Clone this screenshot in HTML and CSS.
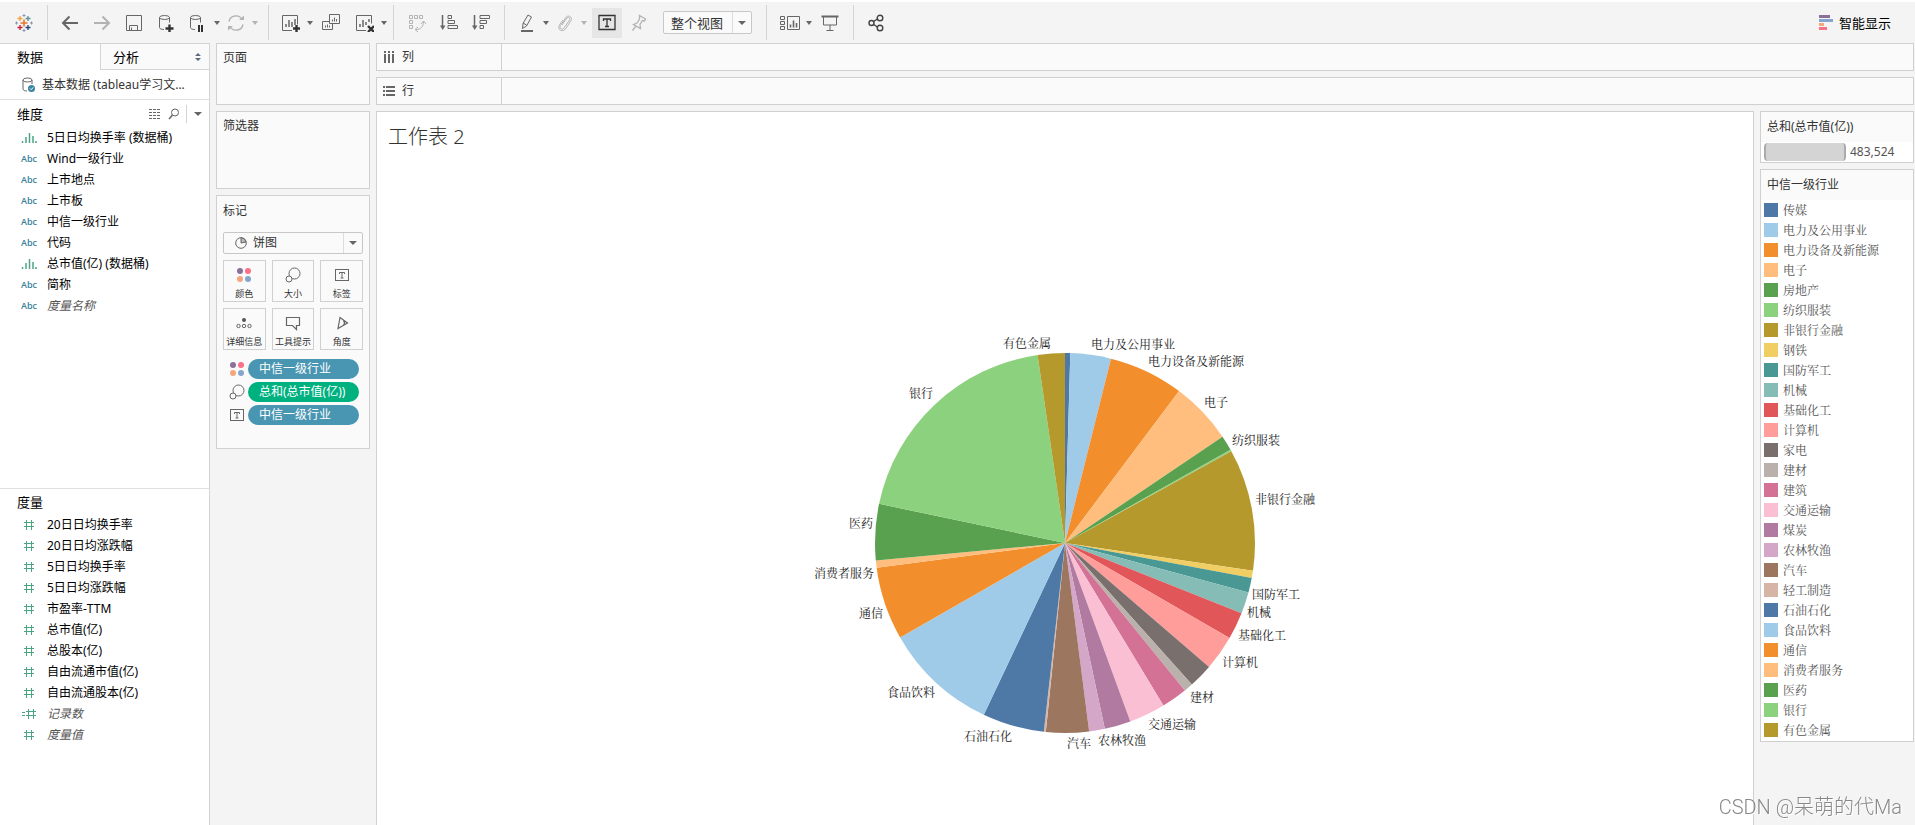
FILE: index.html
```html
<!DOCTYPE html>
<html lang="zh-CN">
<head>
<meta charset="utf-8">
<title>工作表 2</title>
<link rel="stylesheet" href="styles.css">
</head>
<body>
<svg class="sprite" aria-hidden="true">
  <symbol id="i-size" viewBox="0 0 16 16"><circle cx="9.500" cy="6.500" r="5.500"/><circle cx="4" cy="12" r="3" class="cover"/></symbol>
  <symbol id="i-label" viewBox="0 0 16 16"><rect x="1.500" y="2.500" width="13" height="11"/><path d="M5.500 7V5.500h5V7M8 5.500V11M6.500 11h3"/></symbol>
  <symbol id="i-dots" viewBox="0 0 16 16"><g stroke="none"><circle cx="4" cy="4" r="3" fill="#8a7198"/><circle cx="12" cy="4" r="3" fill="#fb7185"/><circle cx="4" cy="12" r="3" fill="#f4a77c"/><circle cx="12" cy="12" r="3" fill="#86a5cd"/></g></symbol>
  <symbol id="i-hist" viewBox="0 0 16 12"><path stroke="#4ba583" stroke-width="1.500" d="M1.500 9v2M5 5v6M8.500 1v10M12 4v7M15 9v2"/></symbol>
  <symbol id="i-hash" viewBox="0 0 12 12"><path stroke="#4ba583" d="M1 3.500h10M1 7.500h10M3.500 1v10M8.500 1v10"/></symbol>
  <symbol id="i-eqhash" viewBox="0 0 16 12"><path stroke="#4ba583" d="M5 3.500h10M5 7.500h10M7.500 1v10M12.500 1v10M1 4.500h3M1 7.500h3"/></symbol>
</svg>

<header class="toolbar">
  <div class="brand">
    <svg class="icon" viewBox="0 0 18 18" aria-label="Tableau"><path stroke="#e8762b" stroke-width="1.600" d="M9 5.500v7M5.500 9h7"/><path stroke="#f0a33c" stroke-width="1.300" d="M5 2v5M2.500 4.500h5"/><path stroke="#5a8f9e" stroke-width="1.300" d="M13 2v5M10.500 4.500h5"/><path stroke="#c72037" stroke-width="1.300" d="M5 11v5M2.500 13.500h5"/><path stroke="#1f447e" stroke-width="1.300" d="M13 11v5M10.500 13.500h5"/><path stroke="#8597b5" d="M9 0v3M7.500 1.500h3M9 15v3M7.500 16.500h3M1.500 7.500v3M0 9h3M16.500 7.500v3M15 9h3"/></svg>
  </div>
  <span class="sep"></span>
  <div class="group wide-end">
    <button class="tool" aria-label="后退"><svg class="icon" viewBox="0 0 18 18"><path stroke-width="2" d="M17 9H2M8.500 2.500L2 9l6.500 6.500"/></svg></button>
    <button class="tool off" aria-label="前进"><svg class="icon" viewBox="0 0 18 18"><path stroke-width="2" d="M1 9h15M9.500 2.500L16 9l-6.500 6.500"/></svg></button>
    <button class="tool" aria-label="保存"><svg class="icon" viewBox="0 0 18 18"><path d="M1.500 1.500h15v15h-15zM4.500 16.500v-5h8v5M6.500 16.500v-3"/></svg></button>
    <button class="tool" aria-label="新建数据源"><svg class="icon" viewBox="0 0 18 18"><ellipse cx="7.500" cy="3.500" rx="5" ry="2"/><path d="M2.500 3.500v10c0 1.300 2 2 4.500 2M12.500 3.500v5"/><path class="dark" stroke-width="2.400" d="M12.500 10.500v8M8.500 14.500h8"/></svg></button>
    <div class="split"><button class="tool" aria-label="暂停自动更新"><svg class="icon" viewBox="0 0 18 18"><ellipse cx="6.500" cy="3.500" rx="5" ry="2"/><path d="M1.500 3.500v10c0 1.300 2 2 4.500 2M11.500 3.500v5"/><path class="dark" stroke-width="2" d="M10 11v7M13 11v7"/></svg></button><button class="caret" aria-label="更多"></button></div>
    <div class="split off"><button class="tool" aria-label="刷新"><svg class="icon" viewBox="0 0 18 18"><path stroke-width="1.400" d="M2 7.500A7 7 0 0 1 15 5.500M16 10.500A7 7 0 0 1 3 12.500"/><path class="fill" d="M12 6h5V1.500zM6 12H1v4.500z"/></svg></button><button class="caret" aria-label="更多"></button></div>
  </div>
  <span class="sep"></span>
  <div class="group spaced">
    <div class="split"><button class="tool" aria-label="新建工作表"><svg class="icon" viewBox="0 0 18 18"><path d="M10 16.500H.500v-15h15v9"/><path stroke-width="1.500" d="M4 13v-3M7 13V6M10 13V8M13 11V5"/><path class="dark" stroke-width="2.400" d="M14.500 11v7.500M11 14.500h7.500"/></svg></button><button class="caret" aria-label="更多"></button></div>
    <button class="tool" aria-label="复制"><svg class="icon" viewBox="0 0 18 18"><path d="M7.500.500h10v9h-10zM7 7.500H.500v8h10V10M10.500 7.500v-2M12.500 7.500v-4M14.500 7.500V5M3.500 13.500v-2M5.500 13.500v-3M7.500 13.500v-2"/></svg></button>
    <div class="split"><button class="tool" aria-label="清除工作表"><svg class="icon" viewBox="0 0 18 18"><path d="M10 16.500H.500v-15h15v8"/><path stroke-width="1.500" d="M4 13v-3M7 13V6M10 11V8M13 8V5"/><path class="dark" stroke-width="2.400" d="M12 12l6 6M18 12l-6 6"/></svg></button><button class="caret" aria-label="更多"></button></div>
  </div>
  <span class="sep"></span>
  <div class="group padded">
    <button class="tool off" aria-label="交换行和列"><svg class="icon" viewBox="0 0 18 18"><path d="M1.500 1.500h3v3h-3zM6.500 1.500h3v3h-3zM11.500 1.500h3v3h-3zM1.500 6.500h3v3h-3zM1.500 11.500h3v3h-3zM8 15.500c5 0 7.500-3 7.500-8M13 10l2.500-3 2.500 3M10 13l-3 2.500L10 18"/></svg></button>
    <button class="tool" aria-label="升序排序"><svg class="icon" viewBox="0 0 18 18"><path stroke-width="1.500" d="M2.500 1v12"/><path class="fill" d="M0 11.500h5.500L2.700 16z"/><path d="M8 1.500h3.500v3H8zM8 6.500h6.500v3H8zM8 11.500h9.500v3H8z"/></svg></button>
    <button class="tool" aria-label="降序排序"><svg class="icon" viewBox="0 0 18 18"><path stroke-width="1.500" d="M2.500 1v12"/><path class="fill" d="M0 11.500h5.500L2.700 16z"/><path d="M8 1.500h9.500v3H8zM8 6.500h6.500v3H8zM8 11.500h3.500v3H8z"/></svg></button>
  </div>
  <span class="sep"></span>
  <div class="group">
    <div class="split"><button class="tool" aria-label="突出显示"><svg class="icon" viewBox="0 0 18 18"><path d="M10 1l3.500 2-5 9-4 2.500.500-5zM5 9l3.500 2"/><path stroke-width="2" d="M3 17h12"/></svg></button><button class="caret" aria-label="更多"></button></div>
    <div class="split off"><button class="tool" aria-label="组成员"><svg class="icon" viewBox="0 0 18 18"><path d="M6 11l5-7c1.500-1.500 3.500 0 2.500 2L8 14c-2 2.500-5 .500-3.500-2.500L9.500 4c2.500-4 7.500-1 5.500 2.500L9.500 15C6 18.500 1 16 3.500 11L7 6"/></svg></button><button class="caret" aria-label="更多"></button></div>
  </div>
  <button class="tool on" aria-label="显示标记标签"><svg class="icon" viewBox="0 0 18 18"><path class="dark" stroke-width="1.300" d="M1 1.500h16v14H1zM5.500 7V5h7v2M9 5v7.500M7 12.500h4"/></svg></button>
  <button class="tool off" aria-label="固定"><svg class="icon" viewBox="0 0 18 18"><path stroke-width="1.300" d="M10.500 1.500l6 3.500-1 2-2-.500-2.500 4 .500 4-7-4 3.500-1.500L10.500 5zM7 12l-3.500 4.500"/></svg></button>
  <label class="picker fit"><select aria-label="适合"><option>整个视图</option></select></label>
  <span class="sep"></span>
  <div class="group spaced padded">
    <div class="split"><button class="tool" aria-label="显示/隐藏卡"><svg class="icon wide" viewBox="0 0 21 18"><path d="M.500 2.500h4v3h-4zM.500 7.500h4v3h-4zM.500 12.500h4v3h-4zM7.500 2.500h12v13h-12z"/><path stroke-width="1.600" d="M10.500 13.500v-3M13.500 13.500v-7M16.500 13.500V9"/></svg></button><button class="caret" aria-label="更多"></button></div>
    <button class="tool" aria-label="演示模式"><svg class="icon" viewBox="0 0 18 18"><path d="M2.500 3v8h13V3M9 11v5M5.500 16.500h7"/><path stroke-width="2" d="M.500 2.500h17"/></svg></button>
  </div>
  <span class="sep"></span>
  <button class="tool" aria-label="共享"><svg class="icon" viewBox="0 0 18 18"><path stroke-width="1.400" stroke="#444" d="M6 8l5-3.500M6 10l5 3.500"/><g stroke-width="1.400" stroke="#444"><circle cx="4.500" cy="9" r="2.500"/><circle cx="13" cy="4" r="2.800"/><circle cx="13" cy="14" r="2.800"/></g></svg></button>
  <button class="show-me"><svg class="icon" viewBox="0 0 18 18"><path stroke="#8a7198" stroke-width="3" d="M2 2.500h11"/><path stroke="#86a5cd" stroke-width="3" d="M2 6.500h14"/><path stroke="#f4a77c" stroke-width="3" d="M2 10.500h5"/><path stroke="#fb7185" stroke-width="3" d="M2 14.500h8"/></svg>智能显示</button>
</header>

<main class="workspace">
  <aside class="data-pane">
    <div class="tabs">
      <button class="tab active">数据</button>
      <button class="tab">分析<svg class="updown" viewBox="0 0 6 8"><path d="M0 3l3-3 3 3zM0 5l3 3 3-3z"/></svg></button>
    </div>
    <a class="source" href="#"><svg class="source-icon" viewBox="0 0 14 16"><ellipse cx="5.500" cy="3" rx="4.500" ry="2"/><path d="M1 3v9c0 1.200 2 2 4 2M10 3v4"/><circle cx="9.500" cy="11.500" r="3.500" fill="#3a85a2" stroke="none"/><path stroke="#fff" d="M8 11.500l1.200 1.200 2-2.300"/></svg>基本数据 (tableau学习文...</a>
    <section class="fields">
      <div class="fields-head"><h2>维度</h2>
        <button class="mini" aria-label="查看数据"><svg viewBox="0 0 12 12"><path stroke-dasharray="3 1" d="M0 1.500h12M0 4.500h12M0 7.500h12M0 10.500h12"/></svg></button>
        <button class="mini" aria-label="查找字段"><svg viewBox="0 0 12 12"><circle cx="7" cy="4.500" r="3.500"/><path stroke-width="1.500" d="M4.500 7L1 11"/></svg></button>
        <button class="mini menu" aria-label="菜单"><i class="arrow"></i></button>
      </div>
      <ul>
        <li><span class="type"><svg class="t16"><use href="#i-hist"/></svg></span>5日日均换手率 (数据桶)</li>
        <li><span class="type">Abc</span>Wind一级行业</li>
        <li><span class="type">Abc</span>上市地点</li>
        <li><span class="type">Abc</span>上市板</li>
        <li><span class="type">Abc</span>中信一级行业</li>
        <li><span class="type">Abc</span>代码</li>
        <li><span class="type"><svg class="t16"><use href="#i-hist"/></svg></span>总市值(亿) (数据桶)</li>
        <li><span class="type">Abc</span>简称</li>
        <li class="generated"><span class="type">Abc</span>度量名称</li>
      </ul>
    </section>
    <section class="fields measures">
      <div class="fields-head"><h2>度量</h2></div>
      <ul>
        <li><span class="type"><svg class="t12"><use href="#i-hash"/></svg></span>20日日均换手率</li>
        <li><span class="type"><svg class="t12"><use href="#i-hash"/></svg></span>20日日均涨跌幅</li>
        <li><span class="type"><svg class="t12"><use href="#i-hash"/></svg></span>5日日均换手率</li>
        <li><span class="type"><svg class="t12"><use href="#i-hash"/></svg></span>5日日均涨跌幅</li>
        <li><span class="type"><svg class="t12"><use href="#i-hash"/></svg></span>市盈率-TTM</li>
        <li><span class="type"><svg class="t12"><use href="#i-hash"/></svg></span>总市值(亿)</li>
        <li><span class="type"><svg class="t12"><use href="#i-hash"/></svg></span>总股本(亿)</li>
        <li><span class="type"><svg class="t12"><use href="#i-hash"/></svg></span>自由流通市值(亿)</li>
        <li><span class="type"><svg class="t12"><use href="#i-hash"/></svg></span>自由流通股本(亿)</li>
        <li class="generated"><span class="type"><svg class="t16"><use href="#i-eqhash"/></svg></span>记录数</li>
        <li class="generated"><span class="type"><svg class="t12"><use href="#i-hash"/></svg></span>度量值</li>
      </ul>
    </section>
  </aside>

  <div class="cards">
    <section class="card pages"><h3>页面</h3></section>
    <section class="card filters"><h3>筛选器</h3></section>
    <section class="card marks">
      <h3>标记</h3>
      <label class="picker mark-type"><svg class="pie-icon" viewBox="0 0 12 12"><circle cx="6" cy="6" r="5.300"/><path fill="#bbb" d="M6 6V.700A5.300 5.300 0 0 1 11 5z"/></svg><select aria-label="标记类型"><option>饼图</option></select></label>
      <div class="mark-grid">
        <button><svg class="m"><use href="#i-dots"/></svg>颜色</button>
        <button><svg class="m"><use href="#i-size"/></svg>大小</button>
        <button><svg class="m"><use href="#i-label"/></svg>标签</button>
        <button><svg class="m" viewBox="0 0 16 16"><circle cx="8" cy="5" r="2" fill="#555" stroke="none"/><circle cx="2.500" cy="11" r="1.700"/><circle cx="8" cy="11" r="1.700"/><circle cx="13.500" cy="11" r="1.700"/></svg>详细信息</button>
        <button><svg class="m" viewBox="0 0 16 16"><path stroke-width="1.200" d="M1.500 2.500h13v8h-3v4l-4-4h-6z"/></svg>工具提示</button>
        <button><svg class="m" viewBox="0 0 16 16"><path stroke-width="1.200" d="M6 2.500l7.500 5.500L4 13.500zM9.500 5.500c1.300 1.500 1.300 3.500 0 5"/></svg>角度</button>
      </div>
      <ul class="pills">
        <li><svg class="m"><use href="#i-dots"/></svg><span class="pill">中信一级行业</span></li>
        <li><svg class="m"><use href="#i-size"/></svg><span class="pill measure">总和(总市值(亿))</span></li>
        <li><svg class="m"><use href="#i-label"/></svg><span class="pill">中信一级行业</span></li>
      </ul>
    </section>
  </div>

  <div class="view">
    <div class="shelf"><div class="shelf-name"><svg viewBox="0 0 12 12"><path stroke-width="2" d="M2 0v2M2 3v9M6 0v2M6 3v9M10 0v2M10 3v9"/></svg>列</div></div>
    <div class="shelf"><div class="shelf-name"><svg viewBox="0 0 12 12"><path stroke-width="2" d="M0 2h2M3 2h9M0 6h2M3 6h9M0 10h2M3 10h9"/></svg>行</div></div>
    <div class="stage">
      <section class="sheet">
        <h1>工作表 2</h1>
        <svg class="pie" viewBox="-265 -215 530 430" role="img" aria-label="各中信一级行业总市值饼图">
          <g id="slices"></g>
          <g id="labels"></g>
        </svg>
      </section>
      <div class="legends">
        <section class="card legend">
          <h3>总和(总市值(亿))</h3>
          <div class="size-row"><span class="size-bar"></span>483,524</div>
        </section>
        <section class="card legend">
          <h3>中信一级行业</h3>
          <ul id="legend"></ul>
        </section>
      </div>
    </div>
  </div>
</main>
<div class="watermark">CSDN @呆萌的代Ma</div>
<script src="chart.js"></script>
</body>
</html>
```
FILE: styles.css
```css
* { box-sizing: border-box; }
body {
  margin: 0;
  min-height: 100vh;
  display: flex;
  flex-direction: column;
  background: #f4f4f4;
  border-top: 2px solid #fff;
  color: #333;
  font: 12px/18px "Noto Sans", "Noto Sans CJK SC", sans-serif;
}
h1, h2, h3, ul { margin: 0; padding: 0; font-weight: 400; }
h3 { font-size: 12px; }
ul { list-style: none; }
button, select { font: inherit; color: inherit; background: none; border: 0; padding: 0; margin: 0; }
svg { fill: none; stroke: #666; display: block; flex: none; }
.sprite { position: absolute; width: 0; height: 0; }
.cover { fill: #fafafa; }
.dark { stroke: #333; }
.fill { fill: #666; stroke: none; }

.toolbar { display: flex; align-items: center; height: 41px; padding-right: 24px; }
.brand { width: 41px; padding-left: 15px; }
.sep { width: 1px; height: 35px; margin: 0 6px; background: #d4d4d4; }
.group, .split { display: flex; align-items: center; }
.group.wide-end { padding-right: 4px; }
.group.spaced { gap: 2px; }
.group.padded { padding: 0 1px; }
.icon { width: 18px; height: 18px; }
.icon.wide { width: 21px; }
.tool { width: 32px; height: 30px; display: flex; align-items: center; justify-content: center; }
.tool.on { width: 30px; margin-left: 5px; background: #e6e6e6; }
.off { opacity: .45; }
.caret { width: 6px; height: 30px; display: flex; align-items: center; }
.caret::before, .arrow, .picker::after {
  content: "";
  border: solid transparent;
  border-width: 4px 3px 0;
  border-top-color: #666;
}
.picker { display: flex; align-items: center; position: relative; border: 1px solid #c8c8c8; border-radius: 2px; background: #fafafa; }
.picker select { appearance: none; flex: 1; min-width: 0; height: 20px; outline: 0; }
.picker::after { position: absolute; right: 5px; border-width: 4px 4px 0; pointer-events: none; }
.picker::before { content: ""; position: absolute; right: 18px; top: 0; bottom: 0; width: 1px; background: #ddd; pointer-events: none; }
.fit { width: 89px; height: 23px; margin: 0 8px 0 9px; padding-left: 7px; font-size: 13px; }
.show-me { display: flex; align-items: center; gap: 4px; margin-left: auto; font-size: 13px; color: #000; }

.workspace { flex: 1; display: flex; gap: 6px; }
.data-pane {
  width: 210px;
  flex: none;
  display: grid;
  grid-template-rows: auto auto 15fr 13fr;
  background: #fff;
  border-right: 1px solid #d4d4d4;
  color: #000;
}
.tabs { display: flex; font-size: 13px; }
.tab { flex: 1; height: 27px; display: flex; align-items: center; justify-content: space-between; padding: 0 8px 0 12px; background: #fafafa; border: solid #d4d4d4; border-width: 1px 0 1px 1px; }
.tab.active { flex: 0 0 100px; padding-left: 17px; background: #fff; border-color: #d4d4d4 transparent transparent; border-left: 0; }
.updown { width: 6px; height: 8px; fill: #5b6b7b; stroke: none; }
.source { display: flex; align-items: center; gap: 6px; height: 30px; padding-left: 22px; border-bottom: 1px solid #e0e0e0; color: #333; text-decoration: none; }
.source-icon { width: 14px; height: 16px; }
.fields-head { display: flex; align-items: center; height: 27px; padding-left: 17px; }
.fields-head h2 { flex: 1; font-size: 13px; }
.mini { width: 19px; height: 18px; display: flex; align-items: center; justify-content: center; }
.mini svg { width: 12px; height: 12px; }
.mini.menu { width: 23px; margin-left: 3px; border-left: 1px solid #d4d4d4; }
.arrow { border-width: 4px 4px 0; }
.fields li { display: flex; align-items: center; height: 21px; padding-left: 18px; }
.type { width: 22px; margin-right: 7px; display: flex; justify-content: center; color: #3a7f9a; font: 600 9px/18px "Open Sans", sans-serif; }
.t16 { width: 16px; height: 12px; }
.t12 { width: 12px; height: 12px; }
.generated { font-style: italic; color: #555; }
.generated .type { font-style: normal; }
.measures { border-top: 1px solid #e0e0e0; }
.measures .fields-head { height: 25px; }

.cards { width: 154px; flex: none; display: flex; flex-direction: column; gap: 6px; }
.card { background: #fafafa; border: 1px solid #d0d0d0; }
.cards .card { padding: 5px 6px 0; }
.pages { min-height: 62px; }
.filters { min-height: 78px; }
.cards .marks { padding-top: 6px; padding-bottom: 23px; }
.mark-type { height: 22px; margin: 12px 0 6px; padding-left: 11px; gap: 6px; }
.pie-icon { width: 12px; height: 12px; }
.mark-grid { display: grid; grid-template-columns: repeat(3, 1fr); gap: 6px; }
.mark-grid button { height: 42px; display: flex; flex-direction: column; align-items: center; justify-content: space-between; padding-top: 6px; border: 1px solid #d0d0d0; font-size: 9px; line-height: 14px; white-space: nowrap; }
.m { width: 16px; height: 16px; }
.pills { display: flex; flex-direction: column; gap: 3px; padding: 9px 4px 0 6px; }
.pills li { display: flex; align-items: center; gap: 3px; }
.pill { flex: 1; height: 20px; line-height: 20px; padding-left: 11px; border-radius: 10px; background: #4996b2; color: #fff; }
.pill.measure { background: #00b180; }

.view { flex: 1; min-width: 0; display: flex; flex-direction: column; gap: 6px; }
.shelf { height: 28px; margin-right: 1px; background: #fafafa; border: 1px solid #d0d0d0; }
.shelf-name { width: 125px; height: 26px; display: flex; align-items: center; gap: 7px; padding-left: 6px; border-right: 1px solid #d0d0d0; }
.shelf-name svg { width: 12px; height: 12px; }
.stage { flex: 1; display: flex; gap: 6px; }
.sheet { flex: 1; display: flex; flex-direction: column; justify-content: space-between; padding: 10px 11px 67px; background: #fff; border: 1px solid #d0d0d0; border-bottom: 0; }
.sheet h1 { font-size: 20px; line-height: 30px; font-weight: 300; }
.pie { width: 530px; max-width: 100%; margin: 0 auto; stroke: none; }
.pie text { fill: #222; stroke: none; }
.pie text, .legend ul { font-family: "Noto Serif CJK SC", "Noto Sans CJK SC", serif; font-size: 12px; font-weight: 400; }

.legends { width: 155px; padding-right: 1px; display: flex; flex-direction: column; gap: 6px; }
.legend { background: #fff; }
.legend h3 { height: 30px; line-height: 30px; padding-left: 6px; background: #fafafa; }
.size-row { display: flex; align-items: center; gap: 4px; height: 20px; padding-left: 3px; color: #555; }
.size-bar { width: 82px; height: 18px; background: #d4d4d4; border: solid #aaa; border-width: 0 2px; border-radius: 4px; }
.legend ul { color: #555; padding: 0 3px 1px; }
.legend li { display: flex; align-items: center; gap: 5px; height: 20px; }
.swatch { width: 14px; height: 14px; }
.watermark { position: fixed; right: 13px; bottom: 4px; color: #888; text-shadow: 1px 1px 0 #fff; font: 300 20px/28px Roboto, "Noto Sans CJK SC", sans-serif; }
```
FILE: chart.js
```js
// name, colour, end angle in degrees clockwise from the top, label position (left, middle)
const industries = [
  ["传媒", "#4e79a7", 1.6],
  ["电力及公用事业", "#a0cbe8", 14, 26, -198],
  ["电力设备及新能源", "#f28e2b", 36.9, 83, -181],
  ["电子", "#ffbe7d", 56, 139, -140],
  ["房地产", "#59a14f", 60.6],
  ["纺织服装", "#8cd17d", 61.1, 167, -102],
  ["非银行金融", "#b6992d", 98.4, 190, -43],
  ["钢铁", "#f1ce63", 100.6],
  ["国防军工", "#499894", 105.1, 187, 52],
  ["机械", "#86bcb6", 111.7, 182, 70],
  ["基础化工", "#e15759", 120, 173, 93],
  ["计算机", "#ff9d9a", 130.7, 157, 120],
  ["家电", "#79706e", 138.1],
  ["建材", "#bab0ac", 140.9, 125, 155],
  ["建筑", "#d37295", 148.8],
  ["交通运输", "#fabfd2", 159.9, 83, 182],
  ["煤炭", "#b07aa1", 167.9],
  ["农林牧渔", "#d4a6c8", 172.7, 33, 198],
  ["汽车", "#9d7660", 185.8, 2, 201],
  ["轻工制造", "#d7b5a6", 186.4],
  ["石油石化", "#4e79a7", 205.3, -101, 194],
  ["食品饮料", "#a0cbe8", 240.2, -178, 150],
  ["通信", "#f28e2b", 262.5, -206, 71],
  ["消费者服务", "#ffbe7d", 264.7, -251, 31],
  ["医药", "#59a14f", 281.9, -216, -19],
  ["银行", "#8cd17d", 351.7, -156, -149],
  ["有色金属", "#b6992d", 360, -62, -199]
];
const NS = "http://www.w3.org/2000/svg";
const R = 190;
const point = deg => {
  const a = deg * Math.PI / 180;
  return (R * Math.sin(a)).toFixed(2) + " " + (-R * Math.cos(a)).toFixed(2);
};
let start = 0;
for (const [name, color, end, x, y] of industries) {
  const slice = document.createElementNS(NS, "path");
  slice.setAttribute("d", `M0 0L${point(start)}A${R} ${R} 0 0 1 ${point(end)}Z`);
  slice.setAttribute("fill", color);
  document.getElementById("slices").append(slice);
  start = end;

  if (x !== undefined) {
    const label = document.createElementNS(NS, "text");
    label.setAttribute("x", x);
    label.setAttribute("y", y + 4);
    label.textContent = name;
    document.getElementById("labels").append(label);
  }

  const row = document.createElement("li");
  const swatch = document.createElement("span");
  swatch.className = "swatch";
  swatch.style.background = color;
  row.append(swatch, name);
  document.getElementById("legend").append(row);
}
```
